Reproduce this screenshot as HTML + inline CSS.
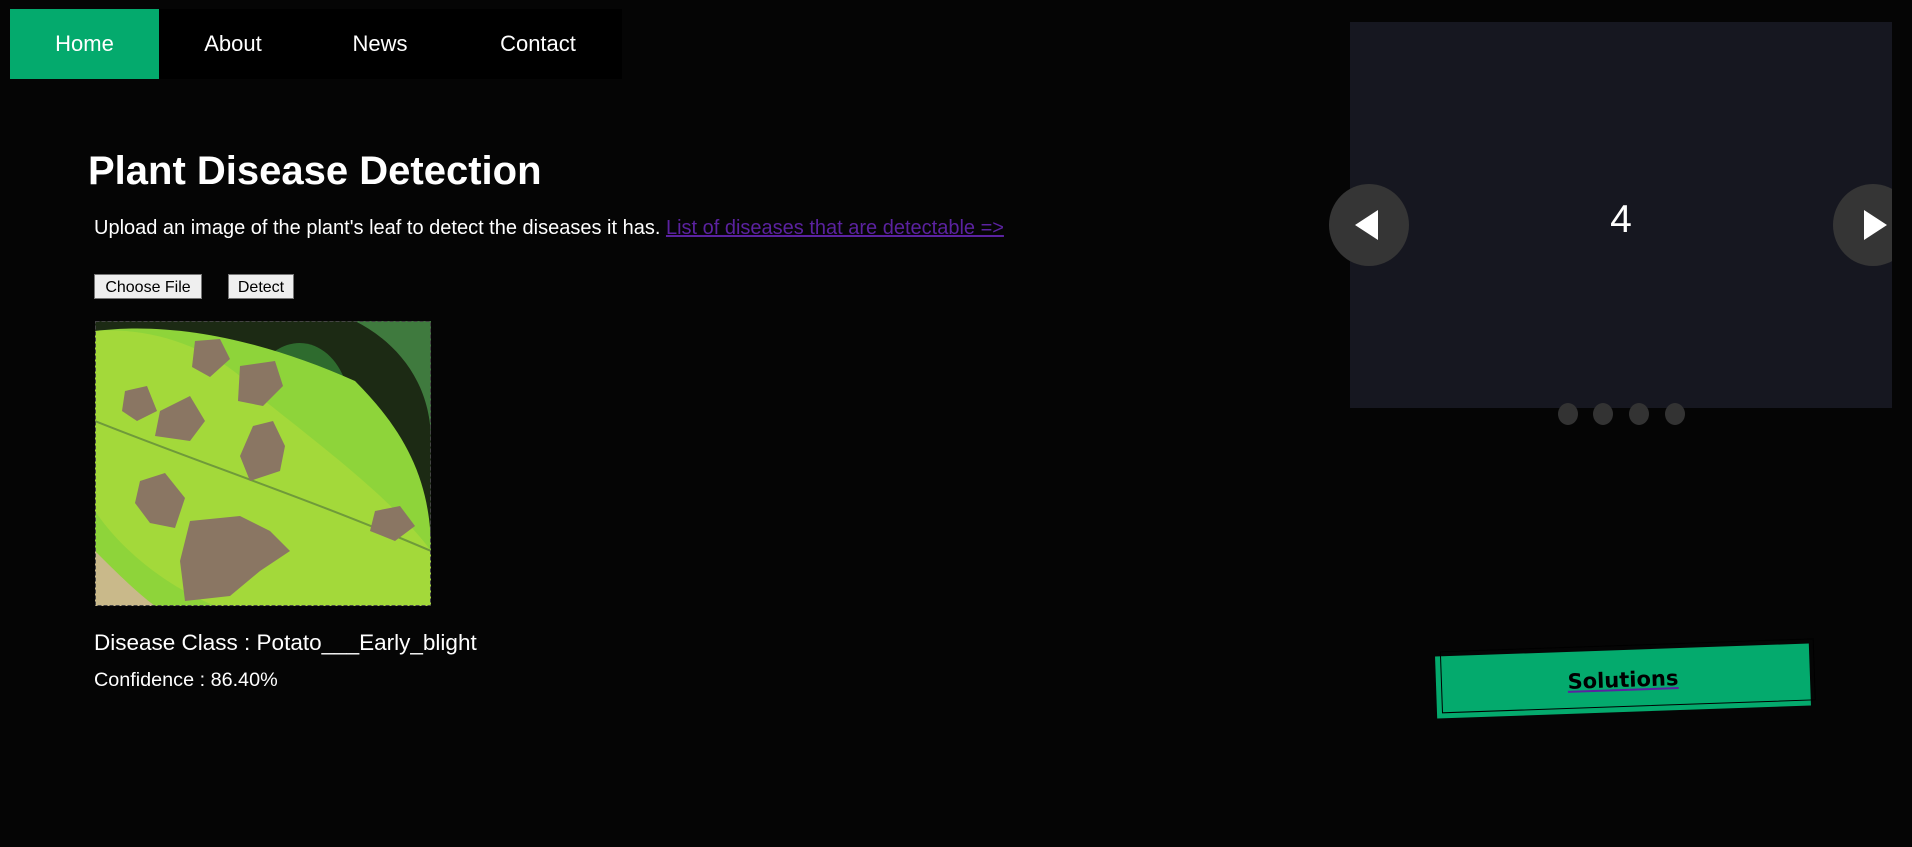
<!DOCTYPE html>
<html><head><meta charset="utf-8"><style>
body{margin:0;width:1912px;height:847px;background:#050505;font-family:"Liberation Sans",Arial,sans-serif;color:#fff;position:relative;overflow:hidden}
.nav{position:absolute;left:10px;top:9px;width:612px;height:70px;background:#000}
.nav a{position:absolute;top:0;height:70px;line-height:70px;font-size:22px;color:#fff;text-decoration:none;text-align:center}
h1{position:absolute;left:88px;top:149px;margin:0;font-size:40px;font-weight:bold}
.p{position:absolute;left:94px;top:217px;font-size:20px}
.p a{color:#5b22a0}
.btn{position:absolute;top:274px;height:25px;background:#efefef;border:1px solid #767676;color:#000;font-size:16px;line-height:25px;text-align:center;box-sizing:border-box}
.car{position:absolute;left:1350px;top:22px;width:542px;height:386px;background:#161720}
.arr{position:absolute;top:184px;width:80px;height:82px;border-radius:50%;background:#353535}
.dot{position:absolute;top:403px;width:20px;height:22px;border-radius:50%;background:#333}
</style></head><body>
<div class="nav">
<a style="left:0;width:149px;background:#04aa6d">Home</a>
<a style="left:168px;width:110px">About</a>
<a style="left:315px;width:110px">News</a>
<a style="left:473px;width:110px">Contact</a>
</div>
<h1>Plant Disease Detection</h1>
<div class="p">Upload an image of the plant's leaf to detect the diseases it has. <a href="#">List of diseases that are detectable =&gt;</a></div>
<div class="btn" style="left:94px;width:108px">Choose File</div>
<div class="btn" style="left:228px;width:66px">Detect</div>
<svg style="position:absolute;left:95px;top:321px" width="336" height="285" viewBox="0 0 336 285">
<rect width="336" height="285" fill="#1c2a14"/>
<path d="M260 0 C300 20 336 60 336 120 L336 0Z" fill="#3f7a3e"/>
<path d="M180 30 C210 10 240 30 250 60 L220 70Z" fill="#2e6b2e"/>
<path d="M0 10 C80 0 170 20 260 60 C310 110 336 160 336 230 L336 285 L0 285Z" fill="#8ed43a"/>
<path d="M0 10 C60 5 130 30 170 80 C220 120 300 180 336 230 L336 285 L120 285 C60 260 20 220 0 190Z" fill="#a3d93a"/>
<path d="M0 100 C100 140 220 180 336 230" stroke="#6f9a3a" stroke-width="2" fill="none"/>
<path d="M0 230 C20 250 40 270 60 285 L0 285Z" fill="#c9b98a"/>
<g fill="#8a7663">
<path d="M100 20 l25 -2 10 20 -20 18 -18 -10Z"/>
<path d="M145 45 l35 -5 8 25 -20 20 -25 -5Z"/>
<path d="M30 70 l22 -5 10 25 -20 10 -15 -10Z"/>
<path d="M65 90 l30 -15 15 25 -15 20 -35 -5Z"/>
<path d="M158 105 l20 -5 12 25 -5 25 -30 10 -10 -25Z"/>
<path d="M45 160 l25 -8 20 25 -10 30 -25 -5 -15 -20Z"/>
<path d="M95 200 l50 -5 30 15 20 20 -30 20 -30 25 -45 5 -5 -40Z"/>
<path d="M280 190 l25 -5 15 20 -20 15 -25 -10Z"/>
</g>
<rect x="0.5" y="0.5" width="335" height="284" fill="none" stroke="#444" stroke-dasharray="4 2"/>
</svg>
<div style="position:absolute;left:94px;top:630px;font-size:22.5px">Disease Class : Potato___Early_blight</div>
<div style="position:absolute;left:94px;top:669px;font-size:19.8px">Confidence : 86.40%</div>
<div class="car"><div style="position:absolute;left:0;right:0;top:175px;text-align:center;font-size:39px;line-height:45px">4</div></div>
<div class="arr" style="left:1329px"><svg width="80" height="82"><path d="M26 41 L49 26 L49 56Z" fill="#fff"/></svg></div>
<div style="position:absolute;left:1833px;top:184px;width:59px;height:82px;overflow:hidden"><div class="arr" style="left:0;top:0"></div><svg style="position:absolute;left:0;top:0" width="59" height="82"><path d="M31 26 L54 41 L31 56Z" fill="#fff"/></svg></div>
<div class="dot" style="left:1558px"></div><div class="dot" style="left:1593px"></div><div class="dot" style="left:1629px"></div><div class="dot" style="left:1665px"></div>
<div style="position:absolute;left:1436px;top:650px;width:374px;height:62px;background:#04aa6d;transform:rotate(-2deg)">
<div style="position:absolute;left:5px;top:-5px;right:-5px;bottom:5px;border:1px solid #000"></div>
<div style="position:absolute;left:0;right:0;top:18px;text-align:center;font-size:21px;font-weight:bold;color:#000;font-family:'DejaVu Sans',sans-serif;text-decoration:underline;text-decoration-color:#5b22a0">Solutions</div>
</div>
</body></html>
